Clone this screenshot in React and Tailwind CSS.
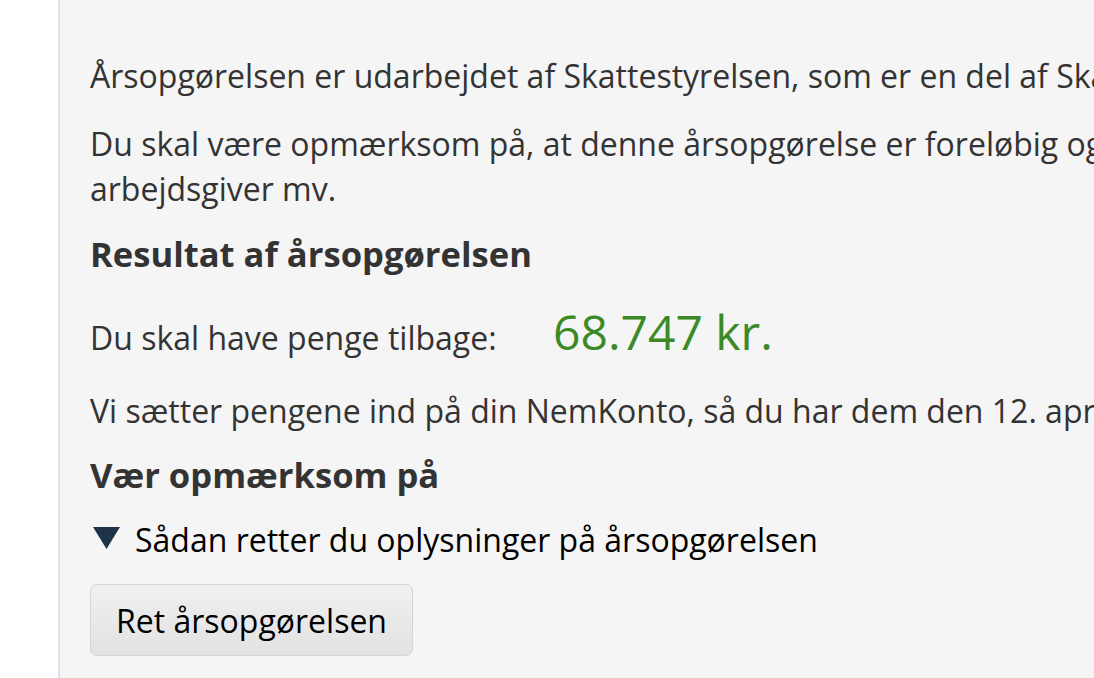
export default function App() {
  return (
    <div className="flex min-h-[678px] w-full bg-white" style={{ fontFamily: '"Open Sans", sans-serif' }}>
      <div className="w-[58px] shrink-0 bg-white" />
      <div className="min-h-[678px] flex-1 overflow-hidden border-l-2 border-[#e2e2ee] bg-[#f5f5f5] pl-[30px] pt-[53px] text-[32px] leading-[45px] text-[#333333]">
        <p className="whitespace-nowrap">Årsopgørelsen er udarbejdet af Skattestyrelsen, som er en del af Skatteforvaltningen.</p>
        <p className="mt-[23px] whitespace-nowrap">Du skal være opmærksom på, at denne årsopgørelse er foreløbig og bygger på oplysninger fra din</p>
        <p className="whitespace-nowrap">arbejdsgiver mv.</p>
        <h2 className="mt-[19px] text-[34.6px] font-bold leading-[48px]">Resultat af årsopgørelsen</h2>
        <div className="mt-[26px] flex items-baseline leading-[56px]">
          <span className="w-[463px] shrink-0">Du skal have penge tilbage:</span>
          <span className="text-[48px] text-[#3b8a26]">68.747 kr.</span>
        </div>
        <p className="mt-[22px] whitespace-nowrap">Vi sætter pengene ind på din NemKonto, så du har dem den 12. april.</p>
        <h2 className="mt-[18px] text-[34.6px] font-bold leading-[48px]">Vær opmærksom på</h2>
        <div className="mt-[18px] flex items-start text-black">
          <svg width="27" height="22" viewBox="0 0 27 22" className="ml-[3px] mt-[10px] shrink-0">
            <polygon points="0,0 27,0 13.5,22" fill="#1d3347" />
          </svg>
          <span className="ml-[15px] whitespace-nowrap">Sådan retter du oplysninger på årsopgørelsen</span>
        </div>
        <button className="mt-[22px] h-[72px] rounded-[7px] border border-[#d6d6d6] bg-gradient-to-b from-[#f0f0f0] to-[#e2e2e2] px-[25px] text-[32px] text-black">
          Ret årsopgørelsen
        </button>
      </div>
    </div>
  );
}
